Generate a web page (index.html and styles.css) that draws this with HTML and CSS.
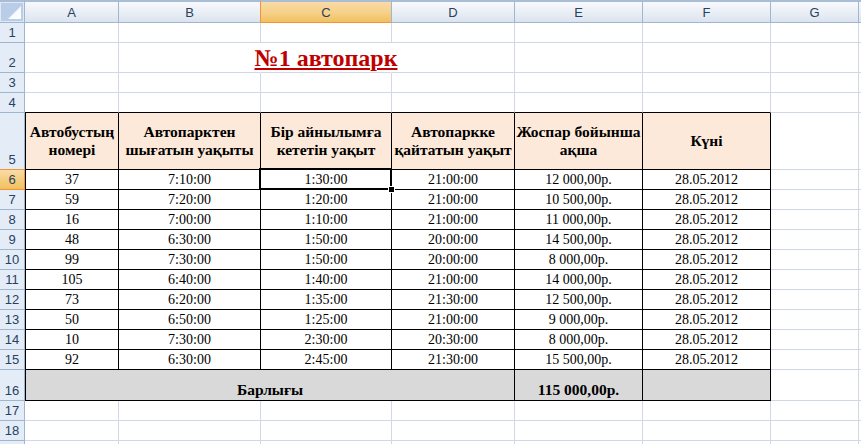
FILE: index.html
```html
<!DOCTYPE html>
<html>
<head>
<meta charset="utf-8">
<link rel="stylesheet" href="styles.css">
</head>
<body>
<div class="sheet">
  <div class="corner"><svg width="24" height="20" viewBox="0 0 24 20"><defs><linearGradient id="g" x1="0" y1="0" x2="1" y2="1"><stop offset="0" stop-color="#eef3fa"/><stop offset="1" stop-color="#ffffff"/></linearGradient></defs><rect x="1" y="1" width="22" height="18" fill="#b9cde8"/><polygon points="21,4 21,17 8,17" fill="url(#g)"/></svg></div>
  <div class="ch">A</div><div class="ch presel">B</div><div class="ch sel">C</div><div class="ch">D</div><div class="ch">E</div><div class="ch">F</div><div class="ch">G</div><div class="ch hcol"></div>

  <div class="rh">1</div><div class="c"></div><div class="c"></div><div class="c"></div><div class="c"></div><div class="c"></div><div class="c"></div><div class="c"></div><div class="c hcol"></div>

  <div class="rh">2</div><div class="c"></div><div class="c nob"></div><div class="c nob title"><span>№1 автопарк</span></div><div class="c"></div><div class="c"></div><div class="c"></div><div class="c"></div><div class="c hcol"></div>

  <div class="rh">3</div><div class="c"></div><div class="c"></div><div class="c"></div><div class="c"></div><div class="c"></div><div class="c"></div><div class="c"></div><div class="c hcol"></div>

  <div class="rh">4</div><div class="c top"></div><div class="c top"></div><div class="c top"></div><div class="c top"></div><div class="c top"></div><div class="c top"></div><div class="c"></div><div class="c hcol"></div>

  <div class="rh presel">5</div>
  <div class="c t ta hd">Автобустың<br>номері</div>
  <div class="c t hd">Автопарктен<br>шығатын уақыты</div>
  <div class="c t hd">Бір айнылымға<br>кететін уақыт</div>
  <div class="c t hd">Автопаркке<br>қайтатын уақыт</div>
  <div class="c t hd">Жоспар бойынша<br>ақша</div>
  <div class="c t hd">Күні</div>
  <div class="c"></div><div class="c hcol"></div>

  <div class="rh sel">6</div><div class="c t ta">37</div><div class="c t">7:10:00</div><div class="c t selc">1:30:00<div class="selbox"><div class="handle"></div></div></div><div class="c t">21:00:00</div><div class="c t">12 000,00р.</div><div class="c t">28.05.2012</div><div class="c"></div><div class="c hcol"></div>

  <div class="rh">7</div><div class="c t ta">59</div><div class="c t">7:20:00</div><div class="c t">1:20:00</div><div class="c t">21:00:00</div><div class="c t">10 500,00р.</div><div class="c t">28.05.2012</div><div class="c"></div><div class="c hcol"></div>

  <div class="rh">8</div><div class="c t ta">16</div><div class="c t">7:00:00</div><div class="c t">1:10:00</div><div class="c t">21:00:00</div><div class="c t">11 000,00р.</div><div class="c t">28.05.2012</div><div class="c"></div><div class="c hcol"></div>

  <div class="rh">9</div><div class="c t ta">48</div><div class="c t">6:30:00</div><div class="c t">1:50:00</div><div class="c t">20:00:00</div><div class="c t">14 500,00р.</div><div class="c t">28.05.2012</div><div class="c"></div><div class="c hcol"></div>

  <div class="rh">10</div><div class="c t ta">99</div><div class="c t">7:30:00</div><div class="c t">1:50:00</div><div class="c t">20:00:00</div><div class="c t">8 000,00р.</div><div class="c t">28.05.2012</div><div class="c"></div><div class="c hcol"></div>

  <div class="rh">11</div><div class="c t ta">105</div><div class="c t">6:40:00</div><div class="c t">1:40:00</div><div class="c t">21:00:00</div><div class="c t">14 000,00р.</div><div class="c t">28.05.2012</div><div class="c"></div><div class="c hcol"></div>

  <div class="rh">12</div><div class="c t ta">73</div><div class="c t">6:20:00</div><div class="c t">1:35:00</div><div class="c t">21:30:00</div><div class="c t">12 500,00р.</div><div class="c t">28.05.2012</div><div class="c"></div><div class="c hcol"></div>

  <div class="rh">13</div><div class="c t ta">50</div><div class="c t">6:50:00</div><div class="c t">1:25:00</div><div class="c t">21:00:00</div><div class="c t">9 000,00р.</div><div class="c t">28.05.2012</div><div class="c"></div><div class="c hcol"></div>

  <div class="rh">14</div><div class="c t ta">10</div><div class="c t">7:30:00</div><div class="c t">2:30:00</div><div class="c t">20:30:00</div><div class="c t">8 000,00р.</div><div class="c t">28.05.2012</div><div class="c"></div><div class="c hcol"></div>

  <div class="rh">15</div><div class="c t ta">92</div><div class="c t">6:30:00</div><div class="c t">2:45:00</div><div class="c t">21:30:00</div><div class="c t">15 500,00р.</div><div class="c t">28.05.2012</div><div class="c"></div><div class="c hcol"></div>

  <div class="rh">16</div><div class="c t ta tot span4">Барлығы</div><div class="c t tot">115 000,00р.</div><div class="c t tot"></div><div class="c"></div><div class="c hcol"></div>

  <div class="rh">17</div><div class="c"></div><div class="c"></div><div class="c"></div><div class="c"></div><div class="c"></div><div class="c"></div><div class="c"></div><div class="c hcol"></div>

  <div class="rh">18</div><div class="c"></div><div class="c"></div><div class="c"></div><div class="c"></div><div class="c"></div><div class="c"></div><div class="c"></div><div class="c hcol"></div>

  <div class="rh"></div><div class="c"></div><div class="c"></div><div class="c"></div><div class="c"></div><div class="c"></div><div class="c"></div><div class="c"></div><div class="c hcol"></div>
</div>
</body>
</html>
```
FILE: styles.css
```css
html, body {
  margin: 0;
  padding: 0;
  background: #fff;
  overflow: hidden;
}
body {
  font-family: "Liberation Serif", "Times New Roman", serif;
}
.sheet {
  display: grid;
  grid-template-columns: 25px 94px 142px 131px 123px 128px 128px 88px 1fr;
  grid-template-rows: 23px 20px 30px 20px 20px 57px repeat(10, 20px) 31px 20px 20px 20px;
  width: 861px;
  height: 444px;
  overflow: hidden;
}
.corner {
  box-sizing: border-box;
  border-top: 2px solid #a9bdd7;
  border-right: 1px solid #9eb6ce;
  border-bottom: 1px solid #9eb6ce;
  background: #dfe8f4;
  display: flex;
}
.corner svg { display: block; }
.ch {
  box-sizing: border-box;
  border-top: 2px solid #a9bdd7;
  border-right: 1px solid #9eb6ce;
  border-bottom: 1px solid #9eb6ce;
  background: linear-gradient(#f7f9fc, #e9eef5 55%, #dbe3ee);
  display: flex;
  align-items: center;
  justify-content: center;
  font: 13px "Liberation Sans", Arial, sans-serif;
  color: #27415f;
}
.ch.presel { border-right-color: #f29436; }
.ch.sel {
  background: linear-gradient(#f9dba5, #f7d088 55%, #f1c15f);
  border-bottom-color: #f29436;
}
.ch.hcol, .c.hcol { border-right: none; }
.rh {
  box-sizing: border-box;
  border-right: 1px solid #9eb6ce;
  border-bottom: 1px solid #9eb6ce;
  background: #e4ecf7;
  display: flex;
  align-items: flex-end;
  justify-content: center;
  padding-bottom: 2px;
  font: 13px/15px "Liberation Sans", Arial, sans-serif;
  color: #27415f;
}
.rh.presel { border-bottom-color: #f29436; }
.rh.sel {
  background: linear-gradient(#f9dba5, #f1c15f);
  border-right-color: #f29436;
  border-bottom-color: #f29436;
}
.c {
  box-sizing: border-box;
  border-right: 1px solid #d0d7e5;
  border-bottom: 1px solid #d0d7e5;
  display: flex;
  align-items: flex-end;
  justify-content: center;
  font-size: 14px;
  line-height: 17px;
  padding-bottom: 1px;
  white-space: nowrap;
  min-width: 0;
  color: #000;
}
.c.nob { border-right-color: transparent; }
.c.top { border-bottom-color: #000; }
.c.t {
  border-right-color: #000;
  border-bottom-color: #000;
}
.c.ta { border-left: 1px solid #000; }
.c.hd {
  background: #fde9d9;
  font-weight: bold;
  font-size: 15.5px;
  line-height: 18px;
  align-items: center;
  text-align: center;
  padding-bottom: 0;
}
.c.tot {
  background: #d9d9d9;
  font-weight: bold;
  font-size: 15.5px;
  padding-bottom: 2px;
}
.c.span4 { grid-column: span 4; }
.c.title {
  overflow: visible;
  position: relative;
  z-index: 1;
  padding-bottom: 1px;
}
.c.title span {
  font-weight: bold;
  font-size: 24px;
  line-height: 26px;
  color: #c00000;
  text-decoration: underline;
  text-decoration-thickness: 2px;
  text-underline-offset: 2px;
}
.c.selc {
  position: relative;
}
.selbox {
  position: absolute;
  left: -2px;
  top: -2px;
  width: calc(100% + 3px);
  height: calc(100% + 3px);
  box-sizing: border-box;
  border: 2px solid #000;
  pointer-events: none;
}
.handle {
  position: absolute;
  right: -5px;
  bottom: -5px;
  width: 5px;
  height: 5px;
  background: #000;
  border: 1px solid #fff;
}
```
